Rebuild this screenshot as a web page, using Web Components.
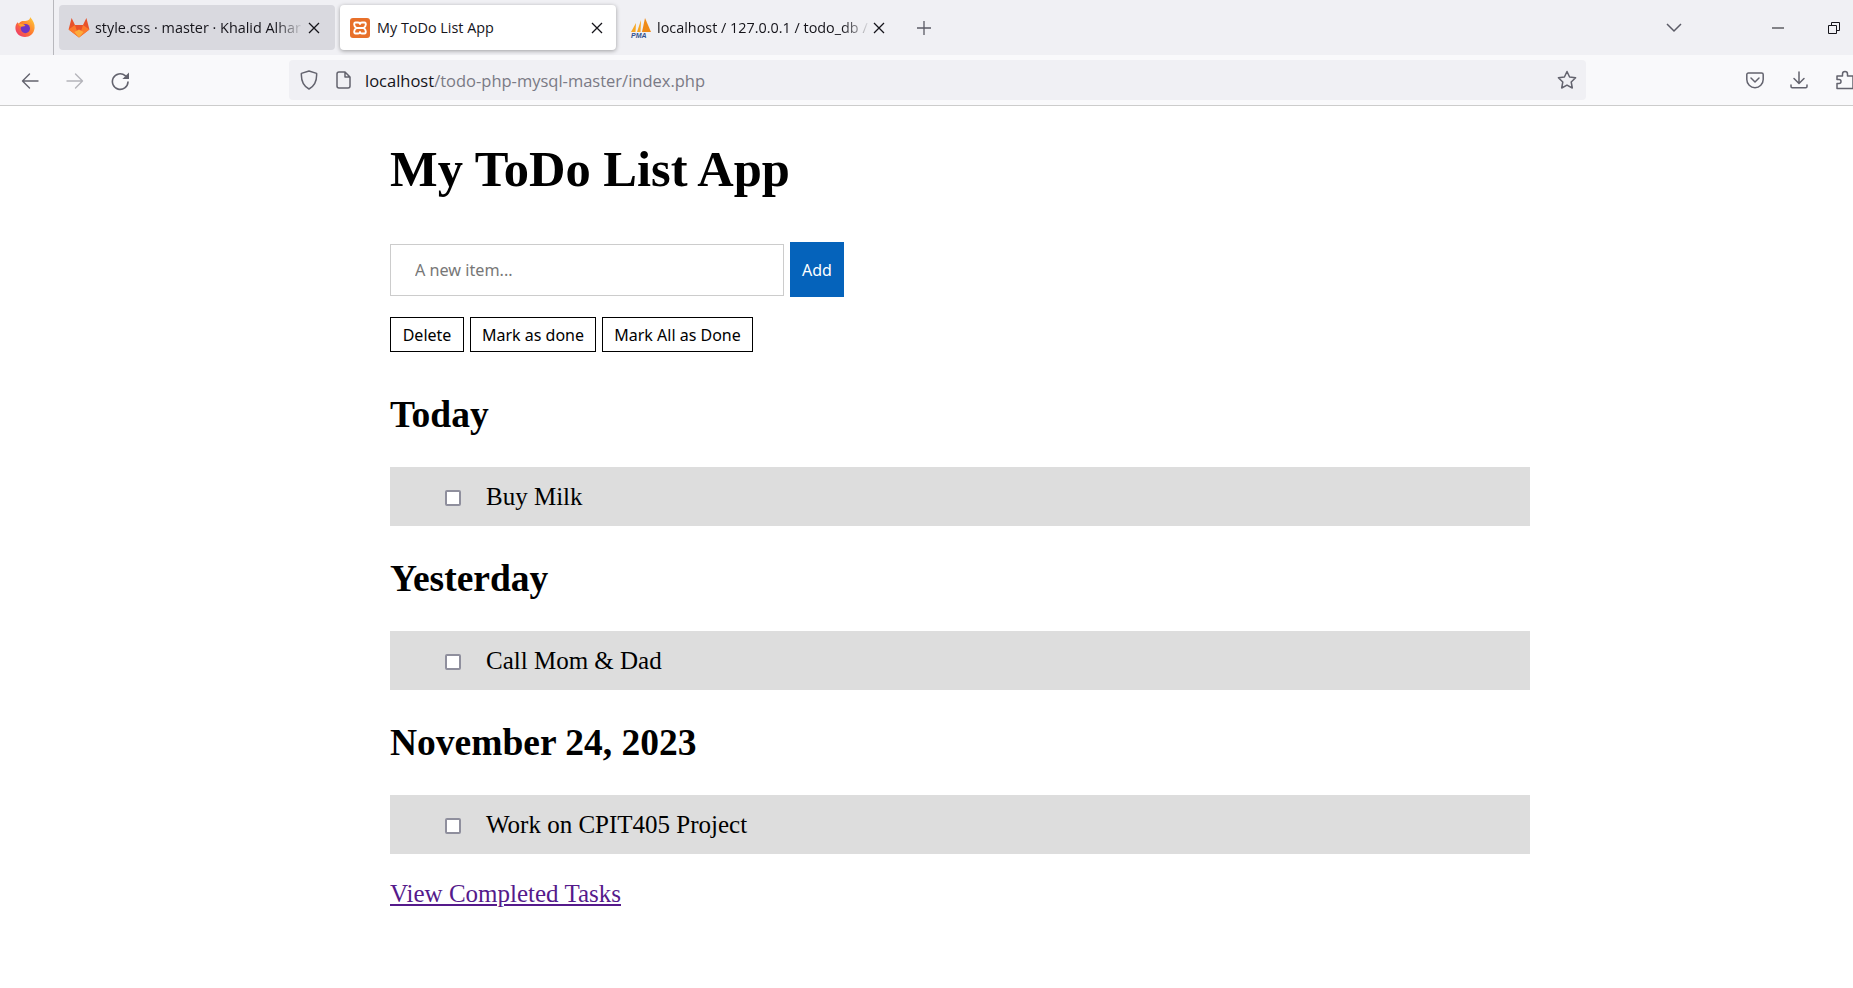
<!DOCTYPE html>
<html>
<head>
<meta charset="utf-8">
<title>My ToDo List App</title>
<style>
  html, body { margin: 0; padding: 0; background: #fff; }
  body { width: 1853px; height: 988px; overflow: hidden; font-family: "Liberation Serif", serif; }
</style>
</head>
<body>
<browser-frame>
  <browser-tab slot="tabs" icon="gitlab" label="style.css · master · Khalid Alhar" width="276"></browser-tab>
  <browser-tab slot="tabs" icon="xampp" label="My ToDo List App" width="276" active></browser-tab>
  <browser-tab slot="tabs" icon="pma" label="localhost / 127.0.0.1 / todo_db /" width="274"></browser-tab>
  <todo-app>
    <todo-section title="Today"><todo-item>Buy Milk</todo-item></todo-section>
    <todo-section title="Yesterday"><todo-item>Call Mom &amp; Dad</todo-item></todo-section>
    <todo-section title="November 24, 2023"><todo-item>Work on CPIT405 Project</todo-item></todo-section>
  </todo-app>
</browser-frame>

<script>
// Small inline icons shared by the browser chrome
const ICONS = {
  gitlab: `<svg width="22" height="21" viewBox="0 0 22 21"><path d="M11 20.5 L.6 12.6 L3.6 1 L7 8 H15 L18.4 1 L21.4 12.6 Z" fill="#e8522a"/><path d="M.6 12.6 L7 8 L11 20.5 Z M21.4 12.6 L15 8 L11 20.5 Z" fill="#fc7a2c"/><path d="M11 20.5 L6.4 15 L11 12.6 L15.6 15 Z" fill="#fcab3a"/></svg>`,
  xampp: `<svg width="20" height="20" viewBox="0 0 20 20"><rect width="20" height="20" rx="3" fill="#e8702a"/><path d="M5.5 4.5 H8 Q10 4.5 10 6 Q10 4.5 12 4.5 H14.5 Q15.8 4.5 15.8 6.5 Q15.8 8.8 13.4 10 Q15.8 11.2 15.8 13.5 Q15.8 15.5 14.5 15.5 H12 Q10 15.5 10 14 Q10 15.5 8 15.5 H5.5 Q4.2 15.5 4.2 13.5 Q4.2 11.2 6.6 10 Q4.2 8.8 4.2 6.5 Q4.2 4.5 5.5 4.5 Z M7 10 H13" fill="none" stroke="#fff" stroke-width="1.9" stroke-linejoin="round"/></svg>`,
  pma: `<svg width="22" height="22" viewBox="0 0 22 22"><path d="M1 15 L6 6 L5.5 15 Z" fill="#f6a623"/><path d="M7 15 L11 3 L10.5 15 Z" fill="#f6a623"/><path d="M12 15 L15 1 L21 15 Z" fill="#ef8a17"/><text x="1" y="21" font-family="Liberation Sans" font-size="7" font-weight="700" font-style="italic" fill="#33508f">PMA</text></svg>`,
  firefox: `<svg width="20" height="22" viewBox="0 0 20 22"><defs><linearGradient id="ff" x1="1" y1="0" x2="0" y2="1"><stop offset="0" stop-color="#ffd53a"/><stop offset=".5" stop-color="#ff7a2e"/><stop offset="1" stop-color="#ea2a7a"/></linearGradient></defs><path d="M15 1 C18 4 20 8 19.6 12 C19 18 14.6 21 10 21 C4.6 21 .4 17 .4 12 C.4 9.6 1.2 7.6 2.6 6.2 C3 7 3.4 7.4 4 7.6 C5 5.6 7 5 9 5 C12.6 5 15.4 3.6 15 1 Z" fill="url(#ff)"/><circle cx="10.4" cy="12.6" r="4.6" fill="#6f35c4"/><path d="M3 8.4 C6 7 9 8 10.4 10 L6 10.8 Z" fill="#ffa02e"/></svg>`,
  back: `<svg width="18" height="18" viewBox="0 0 18 18" fill="none" stroke="currentColor" stroke-width="1.4" stroke-linecap="round" stroke-linejoin="round"><path d="M17 9 H1.5 M8.5 2 L1.5 9 L8.5 16"/></svg>`,
  forward: `<svg width="18" height="18" viewBox="0 0 18 18" fill="none" stroke="currentColor" stroke-width="1.4" stroke-linecap="round" stroke-linejoin="round"><path d="M1 9 H16.5 M9.5 2 L16.5 9 L9.5 16"/></svg>`,
  reload: `<svg width="19" height="19" viewBox="0 0 19 19" fill="none" stroke="currentColor" stroke-width="1.6" stroke-linecap="round"><path d="M17 10 A7.8 7.8 0 1 1 14.2 3.6"/><path d="M18 .4 V7 H11.4 Z" fill="currentColor" stroke="none"/></svg>`,
  shield: `<svg width="18" height="20" viewBox="0 0 18 20" fill="none" stroke="currentColor" stroke-width="1.5" stroke-linejoin="round"><path d="M9 1 L16.6 3.4 C17 10.5 14.6 16 9 19 C3.4 16 1 10.5 1.4 3.4 Z"/></svg>`,
  page: `<svg width="15" height="18" viewBox="0 0 15 18" fill="none" stroke="currentColor" stroke-width="1.5" stroke-linejoin="round"><path d="M3 1 H9 L14 6 V15 A2 2 0 0 1 12 17 H3 A2 2 0 0 1 1 15 V3 A2 2 0 0 1 3 1 Z M9 1 V6 H14"/></svg>`,
  star: `<svg width="20" height="20" viewBox="0 0 20 20" fill="none" stroke="currentColor" stroke-width="1.5" stroke-linejoin="round"><path d="M10 1.5 L12.6 7 L18.6 7.8 L14.2 12 L15.3 18 L10 15.1 L4.7 18 L5.8 12 L1.4 7.8 L7.4 7 Z"/></svg>`,
  pocket: `<svg width="18" height="17" viewBox="0 0 18 17" fill="none" stroke="currentColor" stroke-width="1.5" stroke-linecap="round" stroke-linejoin="round"><path d="M2.4 1 H15.6 A1.6 1.6 0 0 1 17.2 2.6 V7.5 A8.2 8.2 0 0 1 .8 7.5 V2.6 A1.6 1.6 0 0 1 2.4 1 Z"/><path d="M5 6 L9 10 L13 6"/></svg>`,
  download: `<svg width="18" height="18" viewBox="0 0 18 18" fill="none" stroke="currentColor" stroke-width="1.5" stroke-linecap="round" stroke-linejoin="round"><path d="M9 1 V12 M4 7.5 L9 12.5 L14 7.5 M1 14 V15.5 A1.2 1.2 0 0 0 2.2 16.7 H15.8 A1.2 1.2 0 0 0 17 15.5 V14"/></svg>`,
  puzzle: `<svg width="18" height="20" viewBox="0 0 18 20" fill="none" stroke="currentColor" stroke-width="1.5" stroke-linejoin="round"><path d="M1 18.5 V13.5 H3 A2 2 0 0 0 3 9.5 H1 V6 H6.5 V4 A2.5 2.5 0 0 1 11.5 4 V6 H17 V18.5 Z"/></svg>`,
  close: `<svg width="12" height="12" viewBox="0 0 12 12" fill="none" stroke="currentColor" stroke-width="1.3"><path d="M1 1 L11 11 M11 1 L1 11"/></svg>`,
  plus: `<svg width="16" height="16" viewBox="0 0 16 16" fill="none" stroke="currentColor" stroke-width="1.3"><path d="M8 1 V15 M1 8 H15"/></svg>`,
  chevron: `<svg width="16" height="10" viewBox="0 0 16 10" fill="none" stroke="currentColor" stroke-width="1.5"><path d="M1 1 L8 8 L15 1"/></svg>`,
  minimize: `<svg width="12" height="2" viewBox="0 0 12 2"><path d="M0 1 H12" stroke="currentColor" stroke-width="1"/></svg>`,
  restore: `<svg width="12" height="12" viewBox="0 0 12 12" fill="none" stroke="currentColor" stroke-width="1"><path d="M.5 3.5 H8.5 V11.5 H.5 Z M3.5 3.5 V.5 H11.5 V8.5 H8.5"/></svg>`
};

class BrowserTab extends HTMLElement {
  connectedCallback() {
    const active = this.hasAttribute('active');
    const icon = this.getAttribute('icon');
    this.attachShadow({ mode: 'open' }).innerHTML = `
      <style>
        :host { display: flex; flex: none; width: ${this.getAttribute('width')}px; height: 45px; }
        .tab {
          flex: 1; min-width: 0; display: flex; align-items: center;
          padding: 0 15px 0 9px; gap: 5px; border-radius: 4px;
          font: 14.4px "Open Sans", sans-serif; color: #15141a;
        }
        .tab.fill { background: #d9d9df; }
        .tab.active { background: #fff; box-shadow: 0 1px 4px rgba(0,0,0,.35); padding: 0 13px 0 10px; gap: 7px; }
        .icon { flex: none; display: flex; }
        .label { flex: none; white-space: nowrap; }
        .label.fade { -webkit-mask-image: linear-gradient(to right, #000 calc(100% - 26px), rgba(0,0,0,.1)); }
        .close { flex: none; display: flex; margin-left: auto; }
      </style>
      <div class="tab ${active ? 'active' : ''} ${icon === 'gitlab' ? 'fill' : ''}">
        <span class="icon">${ICONS[icon]}</span>
        <span class="label ${active ? '' : 'fade'}">${this.getAttribute('label')}</span>
        <span class="close">${ICONS.close}</span>
      </div>`;
  }
}

class BrowserFrame extends HTMLElement {
  constructor() {
    super();
    this.attachShadow({ mode: 'open' }).innerHTML = `
      <style>
        :host { display: block; height: 988px; overflow: hidden; }
        .strip { display: flex; height: 55px; background: #f0f0f4; box-sizing: border-box; padding-top: 5px; }
        .logo { flex: none; width: 54px; height: 55px; margin-top: -5px; display: flex; align-items: center; justify-content: center; border-right: 1px solid #b8b8bd; box-sizing: border-box; padding-right: 4px; padding-bottom: 1px; }
        .tabs { display: flex; gap: 5px; margin-left: 5px; }
        .strip-btn { flex: none; display: flex; align-items: center; justify-content: center; height: 45px; color: #5b5b66; }
        .plus { margin-left: 21px; }
        .chevron { margin-left: 734px; }
        .min { margin-left: 90px; color: #15141a; }
        .restore { margin-left: 44px; color: #15141a; }
        .toolbar { display: flex; align-items: center; height: 51px; box-sizing: border-box; padding: 0 0 0 21px; background: #f9f9fb; border-bottom: 1px solid #ccc; color: #63636e; white-space: nowrap; overflow: hidden; }
        .toolbar > span, .url > span { display: flex; flex: none; }
        .back, .forward, .reload { margin-top: 2px; }
        .forward { margin-left: 27px; color: #b4b4ba; }
        .reload { margin-left: 27px; }
        .url { flex: none; box-sizing: border-box; width: 1297px; height: 40px; margin-left: 159px; padding: 0 9px 0 11px; display: flex; align-items: center; background: #f0f0f4; border-radius: 4px; font: 16.5px "Open Sans", sans-serif; color: #15141a; }
        .url .page { margin-left: 18px; color: #63636e; }
        .url > span:first-child, .url > span:last-child { color: #63636e; }
        .url .addr { margin-left: 14px; flex: 1; display: block; padding-top: 1px; }
        .addr i { font-style: normal; color: #7a7a85; }
        .pocket { margin-left: 160px; }
        .download { margin-left: 26px; }
        .puzzle { margin-left: 28px; }
      </style>
      <div class="strip">
        <div class="logo">${ICONS.firefox}</div>
        <div class="tabs"><slot name="tabs"></slot></div>
        <span class="strip-btn plus">${ICONS.plus}</span>
        <span class="strip-btn chevron">${ICONS.chevron}</span>
        <span class="strip-btn min">${ICONS.minimize}</span>
        <span class="strip-btn restore">${ICONS.restore}</span>
      </div>
      <div class="toolbar">
        <span class="back">${ICONS.back}</span>
        <span class="forward">${ICONS.forward}</span>
        <span class="reload">${ICONS.reload}</span>
        <div class="url">
          <span>${ICONS.shield}</span>
          <span class="page">${ICONS.page}</span>
          <span class="addr">localhost<i>/todo-php-mysql-master/index.php</i></span>
          <span>${ICONS.star}</span>
        </div>
        <span class="pocket">${ICONS.pocket}</span>
        <span class="download">${ICONS.download}</span>
        <span class="puzzle">${ICONS.puzzle}</span>
      </div>
      <slot></slot>`;
  }
}

class TodoApp extends HTMLElement {
  constructor() {
    super();
    this.attachShadow({ mode: 'open' }).innerHTML = `
      <style>
        :host { display: block; width: 1140px; margin-left: 390px; color: #000; font: 25px "Liberation Serif", serif; }
        h1 { margin: 0; padding-top: 36px; font-size: 50.5px; line-height: 55px; }
        form { display: flex; align-items: center; gap: 6px; margin: 0; padding-top: 45px; }
        input[type=text] { width: 394px; height: 52px; box-sizing: border-box; padding: 0 24px; border: 1px solid #ccc; border-radius: 0; outline: 0; font: 16.2px "Noto Sans", sans-serif; }
        input::placeholder { color: #777; opacity: 1; }
        .add { width: 54px; height: 55px; padding: 0; border: 0; background: #0563bb; color: #fff; font: 16px "Noto Sans", sans-serif; }
        .actions { display: flex; gap: 6px; padding-top: 20px; padding-bottom: 10px; }
        .actions button { height: 35px; padding: 0; background: #fff; border: 1px solid #000; color: #000; font: 16px "Noto Sans", sans-serif; }
        a { display: inline-block; margin-top: 26px; color: #551a8b; text-decoration: underline; line-height: 28px; }
      </style>
      <h1>My ToDo List App</h1>
      <form>
        <input type="text" placeholder="A new item...">
        <button class="add" type="button">Add</button>
      </form>
      <div class="actions">
        <button type="button" style="width:74px">Delete</button>
        <button type="button" style="width:126px">Mark as done</button>
        <button type="button" style="width:151px">Mark All as Done</button>
      </div>
      <slot></slot>
      <a href="#">View Completed Tasks</a>`;
  }
}

class TodoSection extends HTMLElement {
  connectedCallback() {
    this.attachShadow({ mode: 'open' }).innerHTML = `
      <style>
        :host { display: block; }
        h2 { margin: 0; padding-top: 31px; padding-bottom: 31px; font-size: 37.5px; line-height: 43px; }
      </style>
      <h2>${this.getAttribute('title')}</h2>
      <slot></slot>`;
    this.removeAttribute('title');
  }
}

class TodoItem extends HTMLElement {
  constructor() {
    super();
    this.attachShadow({ mode: 'open' }).innerHTML = `
      <style>
        :host { display: flex; align-items: center; height: 59px; background: #ddd; padding-left: 55px; font-size: 25px; }
        .box { flex: none; width: 16px; height: 16px; margin-top: 3px; margin-right: 25px; box-sizing: border-box; border: 2px solid #8f8f9d; border-radius: 2px; background: #fff; }
      </style>
      <span class="box"></span><slot></slot>`;
  }
}

customElements.define('browser-tab', BrowserTab);
customElements.define('browser-frame', BrowserFrame);
customElements.define('todo-app', TodoApp);
customElements.define('todo-section', TodoSection);
customElements.define('todo-item', TodoItem);
</script>
</body>
</html>
